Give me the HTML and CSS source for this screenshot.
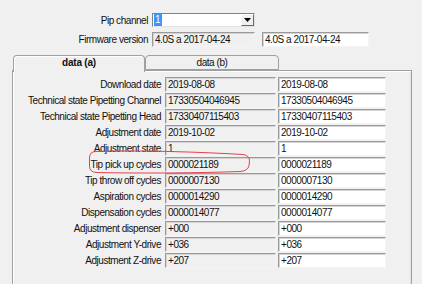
FILE: index.html
```html
<!DOCTYPE html>
<html>
<head>
<meta charset="utf-8">
<link rel="stylesheet" href="styles.css">
</head>
<body>
<div class="top">
  <div class="lbl">Pip channel</div>
  <div class="combo"><span class="sel">1</span><span class="btn"><svg width="7" height="4" viewBox="0 0 7 4"><path d="M0 0H7L3.5 4Z" fill="#000"/></svg></span></div>
  <div></div>
  <div class="lbl">Firmware version</div>
  <div class="fld gray fw">4.0S a 2017-04-24</div>
  <div class="fld white fw2">4.0S a 2017-04-24</div>
</div>
<div class="tabs">
  <div class="tabstrip">
    <div class="tab active">data (a)</div>
    <div class="tab">data (b)</div>
  </div>
  <div class="panel">
    <div class="rows">
      <div class="lbl">Download date</div><div class="fld gray">2019-08-08</div><div class="fld white">2019-08-08</div>
      <div class="lbl">Technical state Pipetting Channel</div><div class="fld gray">17330504046945</div><div class="fld white">17330504046945</div>
      <div class="lbl">Technical state Pipetting Head</div><div class="fld gray">17330407115403</div><div class="fld white">17330407115403</div>
      <div class="lbl">Adjustment date</div><div class="fld gray">2019-10-02</div><div class="fld white">2019-10-02</div>
      <div class="lbl">Adjustment state</div><div class="fld gray">1</div><div class="fld white">1</div>
      <div class="lbl">Tip pick up cycles</div><div class="fld gray">0000021189</div><div class="fld white">0000021189</div>
      <div class="lbl">Tip throw off cycles</div><div class="fld gray">0000007130</div><div class="fld white">0000007130</div>
      <div class="lbl">Aspiration cycles</div><div class="fld gray">0000014290</div><div class="fld white">0000014290</div>
      <div class="lbl">Dispensation cycles</div><div class="fld gray">0000014077</div><div class="fld white">0000014077</div>
      <div class="lbl">Adjustment dispenser</div><div class="fld gray">+000</div><div class="fld white">+000</div>
      <div class="lbl">Adjustment Y-drive</div><div class="fld gray">+036</div><div class="fld white">+036</div>
      <div class="lbl">Adjustment Z-drive</div><div class="fld gray">+207</div><div class="fld white">+207</div>
    </div>
  </div>
</div>
<svg class="mark" width="422" height="284" viewBox="0 0 422 284"><path d="M96 151.5C140 150 200 152 243 154.5Q249.5 155.5 249.5 161L249 165.5Q248 171 240 171.5C200 173 140 173.5 97 172.5Q89.5 172.5 89.5 166L89.5 158Q89.5 151.5 96 151.5Z" fill="none" stroke="#e2434f" stroke-width="1"/></svg>
</body>
</html>
```
FILE: styles.css
```css
html, body {
  margin: 0;
  padding: 0;
}
body {
  width: 422px;
  height: 284px;
  overflow: hidden;
  background: #f0f0f0;
  font-family: "Liberation Sans", Arial, sans-serif;
  font-size: 10px;
  letter-spacing: -0.45px;
  color: #111;
  position: relative;
}
.top {
  display: grid;
  grid-template-columns: 148px 103px 110px;
  column-gap: 4px;
  row-gap: 5px;
  padding-top: 13px;
  align-items: center;
}
.top .fw2 {
  margin-left: 3px;
}
.lbl {
  text-align: right;
  white-space: nowrap;
}
.combo {
  height: 14px;
  box-sizing: border-box;
  background: #fff;
  border-top: 1px solid #828282;
  border-left: 1px solid #828282;
  border-right: 1px solid #e3e3e3;
  border-bottom: 1px solid #e3e3e3;
  display: flex;
  align-items: stretch;
  justify-content: space-between;
}
.sel {
  background: #3399ff;
  color: #fff;
  margin: 0 0 0 1px;
  padding: 0 2px 0 1px;
  display: flex;
  align-items: center;
  line-height: 12px;
}
.btn {
  width: 11px;
  background: #f0f0f0;
  border-left: 1px solid #fff;
  border-top: 1px solid #fff;
  border-right: 1px solid #696969;
  border-bottom: 1px solid #696969;
  display: flex;
  align-items: center;
  justify-content: center;
}
.fld {
  height: 15px;
  box-sizing: border-box;
  border-top: 1px solid #9a9a9a;
  border-left: 1px solid #9a9a9a;
  border-right: 1px solid #f4f4f4;
  border-bottom: 1px solid #f4f4f4;
  box-shadow: inset 1px 1px 0 #d4d4d4;
  padding-left: 2px;
  line-height: 13px;
  white-space: nowrap;
  overflow: hidden;
}
.gray {
  background: #f0f0f0;
}
.white {
  background: #fff;
}
.tabs {
  margin: 8px 0 0 12px;
  width: 400px;
}
.tabstrip {
  display: flex;
  height: 15px;
  margin-left: 1px;
}
.tab {
  box-sizing: border-box;
  height: 15px;
  width: 134px;
  text-align: center;
  line-height: 14px;
  border: 1px solid #a0a0a0;
  border-radius: 4px 4px 0 0;
  background: #f0f0f0;
}
.tab.active {
  width: 132px;
  font-weight: bold;
  letter-spacing: -0.2px;
  border-bottom: none;
  position: relative;
  z-index: 1;
  height: 17px;
  box-shadow: inset 1px 1px 0 #fff;
}
.panel {
  box-sizing: border-box;
  height: 214px;
  border: 1px solid #a0a0a0;
  border-bottom: none;
  box-shadow: inset 1px 1px 0 #fff, inset -1px 0 0 #e3e3e3;
  padding-top: 6px;
}
.rows {
  display: grid;
  grid-template-columns: 152px 111px 110px;
  grid-auto-rows: 15px;
  row-gap: 1px;
  column-gap: 0;
  align-items: center;
}
.rows .lbl {
  padding-right: 4px;
}
.rows .white {
  margin-left: 2px;
}
.mark {
  position: absolute;
  left: 0;
  top: 0;
  pointer-events: none;
}
```
